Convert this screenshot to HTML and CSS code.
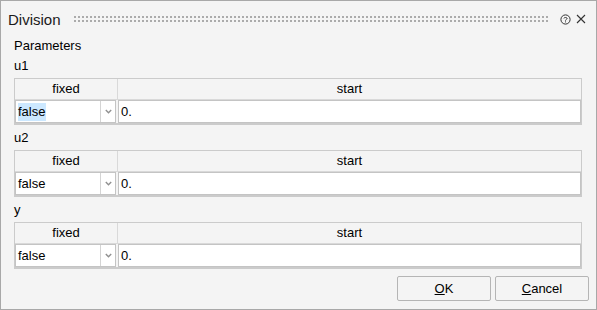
FILE: index.html
```html
<!DOCTYPE html>
<html lang="en">

<head>
    <meta charset="UTF-8">
    <title>Division</title>
    <link rel="stylesheet" href="styles.css">
</head>

<body>

    <div class="dialog">
        <div class="title-bar">
            <span class="title">Division</span>
            <span class="grip"></span>
            <svg class="help" width="11" height="11" viewBox="0 0 11 11">
                <circle cx="5.5" cy="5.5" r="4.6" fill="none" stroke="#333" stroke-width="1"/>
                <path d="M3.9 4.4 C3.9 3.2 7.1 3.2 7.1 4.4 C7.1 5.4 5.5 5.4 5.5 6.6" fill="none" stroke="#333" stroke-width="1"/>
                <rect x="5" y="7.4" width="1" height="1" fill="#333"/>
            </svg>
            <svg class="close" width="10" height="10" viewBox="0 0 10 10">
                <path d="M1 1 L9 9 M9 1 L1 9" stroke="#333" stroke-width="1.1"/>
            </svg>
        </div>

        <div class="content">
            <div class="section-label">Parameters</div>

            <div class="param">
                <div class="param-name">u1</div>
                <div class="param-table">
                    <div class="head head-fixed">fixed</div>
                    <div class="head">start</div>
                    <div class="cell-select">
                        <span class="select-value"><span class="selected">false</span></span>
                        <span class="select-arrow">
                            <svg width="7" height="5" viewBox="0 0 7 5"><path d="M0.8 1 L3.5 3.7 L6.2 1" fill="none" stroke="#909090" stroke-width="1.4"/></svg>
                        </span>
                    </div>
                    <div class="cell-input">0.</div>
                </div>
            </div>

            <div class="param">
                <div class="param-name">u2</div>
                <div class="param-table">
                    <div class="head head-fixed">fixed</div>
                    <div class="head">start</div>
                    <div class="cell-select">
                        <span class="select-value">false</span>
                        <span class="select-arrow">
                            <svg width="7" height="5" viewBox="0 0 7 5"><path d="M0.8 1 L3.5 3.7 L6.2 1" fill="none" stroke="#909090" stroke-width="1.4"/></svg>
                        </span>
                    </div>
                    <div class="cell-input">0.</div>
                </div>
            </div>

            <div class="param">
                <div class="param-name">y</div>
                <div class="param-table">
                    <div class="head head-fixed">fixed</div>
                    <div class="head">start</div>
                    <div class="cell-select">
                        <span class="select-value">false</span>
                        <span class="select-arrow">
                            <svg width="7" height="5" viewBox="0 0 7 5"><path d="M0.8 1 L3.5 3.7 L6.2 1" fill="none" stroke="#909090" stroke-width="1.4"/></svg>
                        </span>
                    </div>
                    <div class="cell-input">0.</div>
                </div>
            </div>
        </div>

        <div class="buttons">
            <button class="btn"><u>O</u>K</button>
            <button class="btn"><u>C</u>ancel</button>
        </div>
    </div>

</body>

</html>
```

FILE: styles.css
```css
body {
    margin: 0;
    padding: 0;
    font-family: 'Liberation Sans', Arial, sans-serif;
    font-size: 13px;
    color: #000;
    background: #fff;
}

.dialog {
    width: 597px;
    height: 310px;
    box-sizing: border-box;
    border: 1px solid #a8a8a8;
    background-color: #f4f4f4;
    display: flex;
    flex-direction: column;
}

.title-bar {
    height: 36px;
    display: flex;
    align-items: center;
    padding: 0 10px 0 7px;
    flex-shrink: 0;
}

.title {
    font-size: 15px;
    color: #1a1a1a;
    margin-right: 13px;
}

.grip {
    flex: 1;
    height: 6px;
    margin: 0 12px 0 0;
    background-image:
        linear-gradient(90deg, #ababab 2px, transparent 2px),
        linear-gradient(90deg, #ababab 2px, transparent 2px);
    background-size: 4px 2px, 4px 2px;
    background-position: 0 0, 0 4px;
    background-repeat: repeat-x;
}

.help {
    margin-right: 5px;
}

.content {
    padding: 0 14px 0 13px;
    flex: 1;
}

.section-label {
    height: 18px;
    line-height: 18px;
}

.param {
    margin-top: 2px;
}

.param + .param {
    margin-top: 4px;
}

.param-name {
    height: 18px;
    line-height: 18px;
    margin-bottom: 3px;
}

.param-table {
    display: grid;
    grid-template-columns: 103px 1fr;
    border: 1px solid #cbcbcb;
    border-bottom-width: 2px;
}

.head {
    height: 20px;
    line-height: 20px;
    text-align: center;
    border-bottom: 1px solid #d9d9d9;
}

.head-fixed {
    border-right: 1px solid #d9d9d9;
}

.cell-select {
    height: 21px;
    display: flex;
    background: #fff;
    border: 1px solid #c4c4c4;
    margin-right: 2px;
}

.select-value {
    flex: 1;
    padding-left: 2px;
    line-height: 21px;
}

.selected {
    display: inline-block;
    background: #cce8ff;
    line-height: 18px;
    padding-right: 1px;
}

.select-arrow {
    width: 14px;
    border-left: 1px solid #d4d4d4;
    display: flex;
    align-items: center;
    justify-content: center;
}

.cell-input {
    height: 21px;
    line-height: 21px;
    background: #fff;
    border: 1px solid #c4c4c4;
    padding-left: 2px;
}

.buttons {
    display: flex;
    justify-content: flex-end;
    gap: 4px;
    padding: 0 7px 8px 0;
}

.btn {
    width: 94px;
    height: 25px;
    padding: 0;
    font-family: 'Liberation Sans', Arial, sans-serif;
    font-size: 13px;
    background: #f4f4f4;
    border: 1px solid #b5b5b5;
    border-radius: 2px;
    color: #000;
}
```
